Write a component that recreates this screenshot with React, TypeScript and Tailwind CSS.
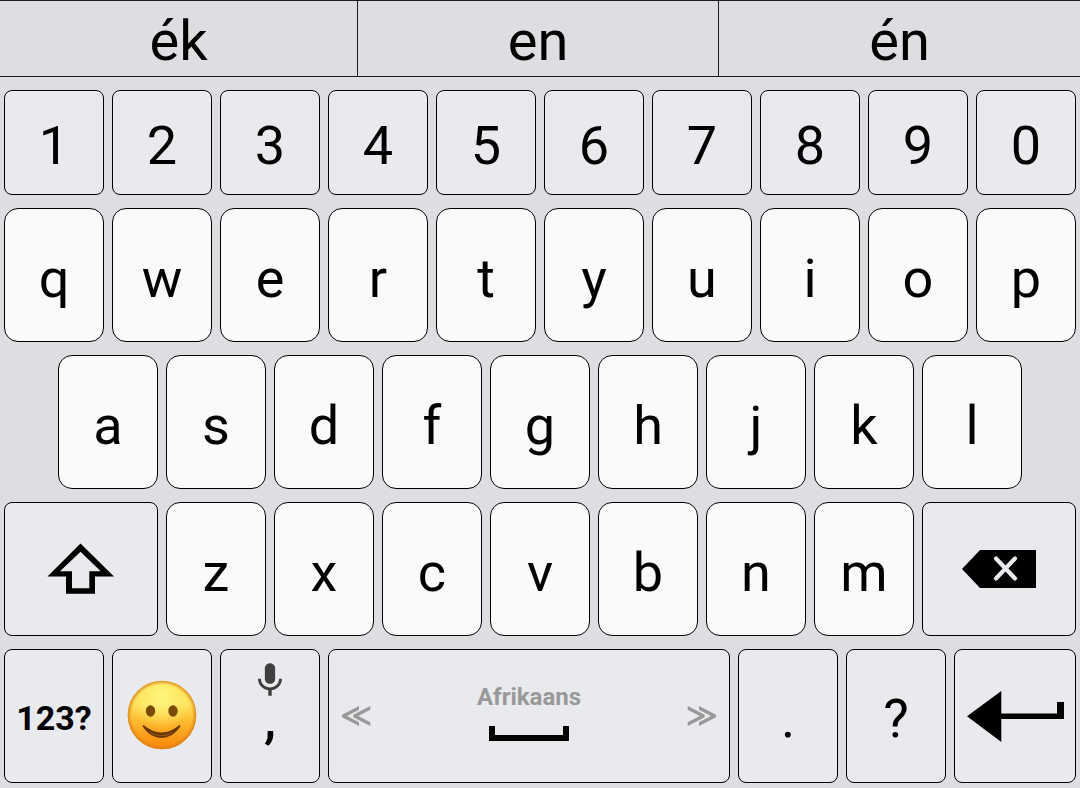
import { useState } from "react";
import type { ReactNode } from "react";
import clsx from "clsx";

const suggestions = ["ék", "en", "én"];

const numberRow = ["1", "2", "3", "4", "5", "6", "7", "8", "9", "0"];
const topRow = ["q", "w", "e", "r", "t", "y", "u", "i", "o", "p"];
const homeRow = ["a", "s", "d", "f", "g", "h", "j", "k", "l"];
const bottomRow = ["z", "x", "c", "v", "b", "n", "m"];

type KeyProps = {
  children: ReactNode;
  label?: string;
  className?: string;
  onClick?: () => void;
};

function LetterKey({ children, label, className, onClick }: KeyProps) {
  return (
    <button
      type="button"
      aria-label={label}
      onClick={onClick}
      className={clsx(
        "col-span-2 flex h-[134px] items-center justify-center rounded-[14px] border border-black bg-[#fafafa] pt-[8px] text-[54px] leading-none active:bg-gray-200",
        className
      )}
    >
      {children}
    </button>
  );
}

function FunctionKey({ children, label, className, onClick }: KeyProps) {
  return (
    <button
      type="button"
      aria-label={label}
      onClick={onClick}
      className={clsx(
        "relative flex items-center justify-center rounded-lg border border-black bg-[#e9eaee] leading-none active:bg-gray-300",
        className
      )}
    >
      {children}
    </button>
  );
}

function ShiftIcon() {
  return (
    <svg width="68" height="52" viewBox="0 0 68 52" fillRule="evenodd">
      <path d="M33.5 0.5L67 33.5H48V50.7H19V33.5H0.5ZM33.5 8.7L13 28.3H25V45.3H42.3V28.3H53.7Z" />
    </svg>
  );
}

function BackspaceIcon() {
  return (
    <svg width="74" height="38" viewBox="0 0 74 38">
      <path d="M0 19L18 0H74V38H18Z" />
      <path d="M34 8.5L53 28.5M53 8.5L34 28.5" stroke="#e9eaee" strokeWidth="4.2" strokeLinecap="round" />
    </svg>
  );
}

function EnterIcon() {
  return (
    <svg width="97" height="51" viewBox="0 0 97 51">
      <path d="M0 25.3L34.3 0V22.5H90V11H97V28H34.3V51Z" />
    </svg>
  );
}

function SpaceIcon() {
  return (
    <svg width="80" height="15" viewBox="0 0 80 15">
      <path d="M0 0H6V9H74V0H80V15H0Z" />
    </svg>
  );
}

function MicIcon() {
  return (
    <svg className="absolute top-[13px] left-1/2 -translate-x-1/2" width="24" height="33" viewBox="5 2 14 19" fill="#404040">
      <path d="M12 14c1.66 0 3-1.34 3-3V5c0-1.66-1.34-3-3-3S9 3.34 9 5v6c0 1.66 1.34 3 3 3z" />
      <path d="M17.3 11c0 3-2.54 5.1-5.3 5.1S6.7 14 6.7 11H5c0 3.41 2.72 6.23 6 6.72V21h2v-3.28c3.28-.48 6-3.3 6-6.72h-1.7z" />
    </svg>
  );
}

function ChevronsIcon({ flipped = false }: { flipped?: boolean }) {
  return (
    <svg className={flipped ? "-scale-x-100" : ""} width="29" height="20" viewBox="0 0 29 20" fill="#999999">
      <path d="M17 0V3.7L5 10L17 16.3V20L0 11.3V8.7Z" />
      <path d="M28.3 0V3.7L16.3 10L28.3 16.3V20L11.3 11.3V8.7Z" />
    </svg>
  );
}

function SmileIcon() {
  return (
    <svg width="70" height="70" viewBox="0 0 70 70">
      <defs>
        <linearGradient id="face" x1="0" y1="0" x2="0" y2="1">
          <stop offset="0" stopColor="#fde04c" />
          <stop offset="0.35" stopColor="#fedf5a" />
          <stop offset="0.6" stopColor="#fdb92d" />
          <stop offset="1" stopColor="#f88307" />
        </linearGradient>
        <radialGradient id="shine" cx="0.5" cy="0.25" r="0.45">
          <stop offset="0" stopColor="#fff67e" />
          <stop offset="1" stopColor="#fff67e" stopOpacity="0" />
        </radialGradient>
        <radialGradient id="rim">
          <stop offset="0.88" stopColor="#d9821a" stopOpacity="0" />
          <stop offset="1" stopColor="#d9821a" stopOpacity="0.9" />
        </radialGradient>
      </defs>
      <circle cx="35" cy="35" r="34.3" fill="url(#face)" />
      <circle cx="35" cy="35" r="34.3" fill="url(#shine)" />
      <circle cx="35" cy="35" r="34.3" fill="url(#rim)" />
      <ellipse cx="23.5" cy="31" rx="4.7" ry="5.7" fill="#7a4a05" />
      <ellipse cx="46" cy="31" rx="4.7" ry="5.7" fill="#7a4a05" />
      <path d="M16.5 45Q34.5 60 52.5 45C53.5 45 53.5 46 53 47C43 61.5 26 61.5 16 47C15.5 46 15.5 45 16.5 45Z" fill="#6b3604" />
      <path d="M23 52.5Q34.5 59 46 52.5" fill="none" stroke="#98591a" strokeWidth="1" />
    </svg>
  );
}

export default function App() {
  const [shifted, setShifted] = useState(false);

  const renderLetter = (letter: string, className?: string) => (
    <LetterKey key={letter} className={className}>
      {shifted ? letter.toUpperCase() : letter}
    </LetterKey>
  );

  return (
    <div className="bg-[#dddee2] font-['Roboto',sans-serif] text-black select-none">
      {/* Suggestions */}
      <div className="grid h-[77px] grid-cols-[358fr_361fr_361fr] border-y border-[#1c1c1e]">
        {suggestions.map((word) => (
          <button
            key={word}
            type="button"
            className="flex items-center justify-center border-r border-[#1c1c1e] pt-[5px] text-[56px] leading-none last:border-r-0"
          >
            {word}
          </button>
        ))}
      </div>

      {/* Keys */}
      <div className="flex flex-col gap-[13px] px-1 pt-[13px] pb-[5px]">
        <div className="grid grid-cols-10 gap-2">
          {numberRow.map((digit) => (
            <FunctionKey key={digit} className="h-[105px] pt-[6px] text-[54px]">
              {digit}
            </FunctionKey>
          ))}
        </div>

        <div className="grid grid-cols-20 gap-2">
          {topRow.map((letter) => renderLetter(letter))}
        </div>

        <div className="grid grid-cols-20 gap-2">
          {homeRow.map((letter) => renderLetter(letter, letter === "a" ? "col-start-2" : undefined))}
        </div>

        <div className="grid grid-cols-20 gap-2">
          <FunctionKey label="Shift" className="col-span-3" onClick={() => setShifted(!shifted)}>
            <ShiftIcon />
          </FunctionKey>
          {bottomRow.map((letter) => renderLetter(letter))}
          <FunctionKey label="Backspace" className="col-span-3">
            <BackspaceIcon />
          </FunctionKey>
        </div>

        <div className="grid h-[134px] grid-cols-[100fr_100fr_100fr_402fr_100fr_100fr_122fr] gap-2">
          <FunctionKey className="pt-1 text-[34px] font-bold">123?</FunctionKey>
          <FunctionKey label="Emoji" className="pb-0.5">
            <SmileIcon />
          </FunctionKey>
          <FunctionKey className="pt-[6px] text-[54px] font-medium">
            <MicIcon />,
          </FunctionKey>
          <FunctionKey label="Space" className="px-[13px]">
            <ChevronsIcon />
            <span className="flex flex-1 flex-col items-center gap-[15px] pb-2">
              <span className="text-[24px] leading-[28px] font-bold text-[#999999]">Afrikaans</span>
              <SpaceIcon />
            </span>
            <ChevronsIcon flipped />
          </FunctionKey>
          <FunctionKey className="pt-[6px] text-[54px]">.</FunctionKey>
          <FunctionKey className="pt-[6px] text-[54px]">?</FunctionKey>
          <FunctionKey label="Enter">
            <EnterIcon />
          </FunctionKey>
        </div>
      </div>
    </div>
  );
}
